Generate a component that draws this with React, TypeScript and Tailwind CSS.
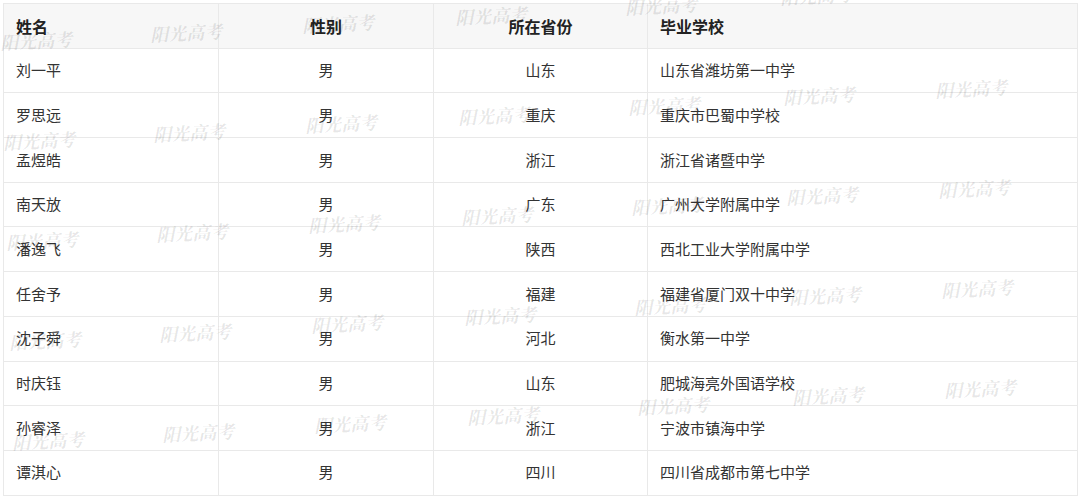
import React from "react";

const rows: [string, string, string, string][] = [
  ["刘一平", "男", "山东", "山东省潍坊第一中学"],
  ["罗思远", "男", "重庆", "重庆市巴蜀中学校"],
  ["孟煜皓", "男", "浙江", "浙江省诸暨中学"],
  ["南天放", "男", "广东", "广州大学附属中学"],
  ["潘逸飞", "男", "陕西", "西北工业大学附属中学"],
  ["任舍予", "男", "福建", "福建省厦门双十中学"],
  ["沈子舜", "男", "河北", "衡水第一中学"],
  ["时庆钰", "男", "山东", "肥城海亮外国语学校"],
  ["孙睿泽", "男", "浙江", "宁波市镇海中学"],
  ["谭淇心", "男", "四川", "四川省成都市第七中学"],
];

const xs = [0, 150, 302, 455, 625, 780, 932];
const dys = [0, -8, -17, -25, -35, -45, -52];
const marks: { x: number; y: number }[] = [];
for (let b = 0; b < 5; b++) {
  for (let i = 0; i < xs.length; i++) {
    marks.push({ x: xs[i] + b * 3, y: 40 + b * 100 + dys[i] });
  }
}

export default function App() {
  return (
    <div
      className="relative h-[498px] w-[1080px] overflow-hidden bg-white pl-[3px] pt-[3px]"
      style={{ fontFamily: '"Noto Sans CJK SC", "Noto Sans", sans-serif' }}
    >
      <table className="w-[1074px] table-fixed border-collapse text-[15px] text-[#333]">
        <colgroup>
          <col className="w-[215px]" />
          <col className="w-[215px]" />
          <col className="w-[214px]" />
          <col className="w-[430px]" />
        </colgroup>
        <thead>
          <tr className="bg-[#f7f7f7]">
            <th className="h-[44.7px] border border-[#e9e9e9] pl-[12px] text-left text-[16px] font-bold text-[#222]">姓名</th>
            <th className="h-[44.7px] border border-[#e9e9e9] text-center text-[16px] font-bold text-[#222]">性别</th>
            <th className="h-[44.7px] border border-[#e9e9e9] text-center text-[16px] font-bold text-[#222]">所在省份</th>
            <th className="h-[44.7px] border border-[#e9e9e9] pl-[12px] text-left text-[16px] font-bold text-[#222]">毕业学校</th>
          </tr>
        </thead>
        <tbody>
          {rows.map((r) => (
            <tr key={r[0]}>
              <td className="h-[44.7px] border border-[#e9e9e9] pl-[12px] text-left">{r[0]}</td>
              <td className="h-[44.7px] border border-[#e9e9e9] text-center">{r[1]}</td>
              <td className="h-[44.7px] border border-[#e9e9e9] text-center">{r[2]}</td>
              <td className="h-[44.7px] border border-[#e9e9e9] pl-[12px] text-left">{r[3]}</td>
            </tr>
          ))}
        </tbody>
      </table>
      <div className="pointer-events-none absolute inset-0">
        {marks.map((m, i) => (
          <span
            key={i}
            className="absolute -rotate-3 whitespace-nowrap text-[18px] font-bold italic leading-[20px] text-[rgba(0,0,0,0.1)]"
            style={{ left: m.x, top: m.y - 10, fontFamily: '"Noto Serif CJK SC", "Noto Sans CJK SC", serif' }}
          >
            阳光高考
          </span>
        ))}
      </div>
    </div>
  );
}
